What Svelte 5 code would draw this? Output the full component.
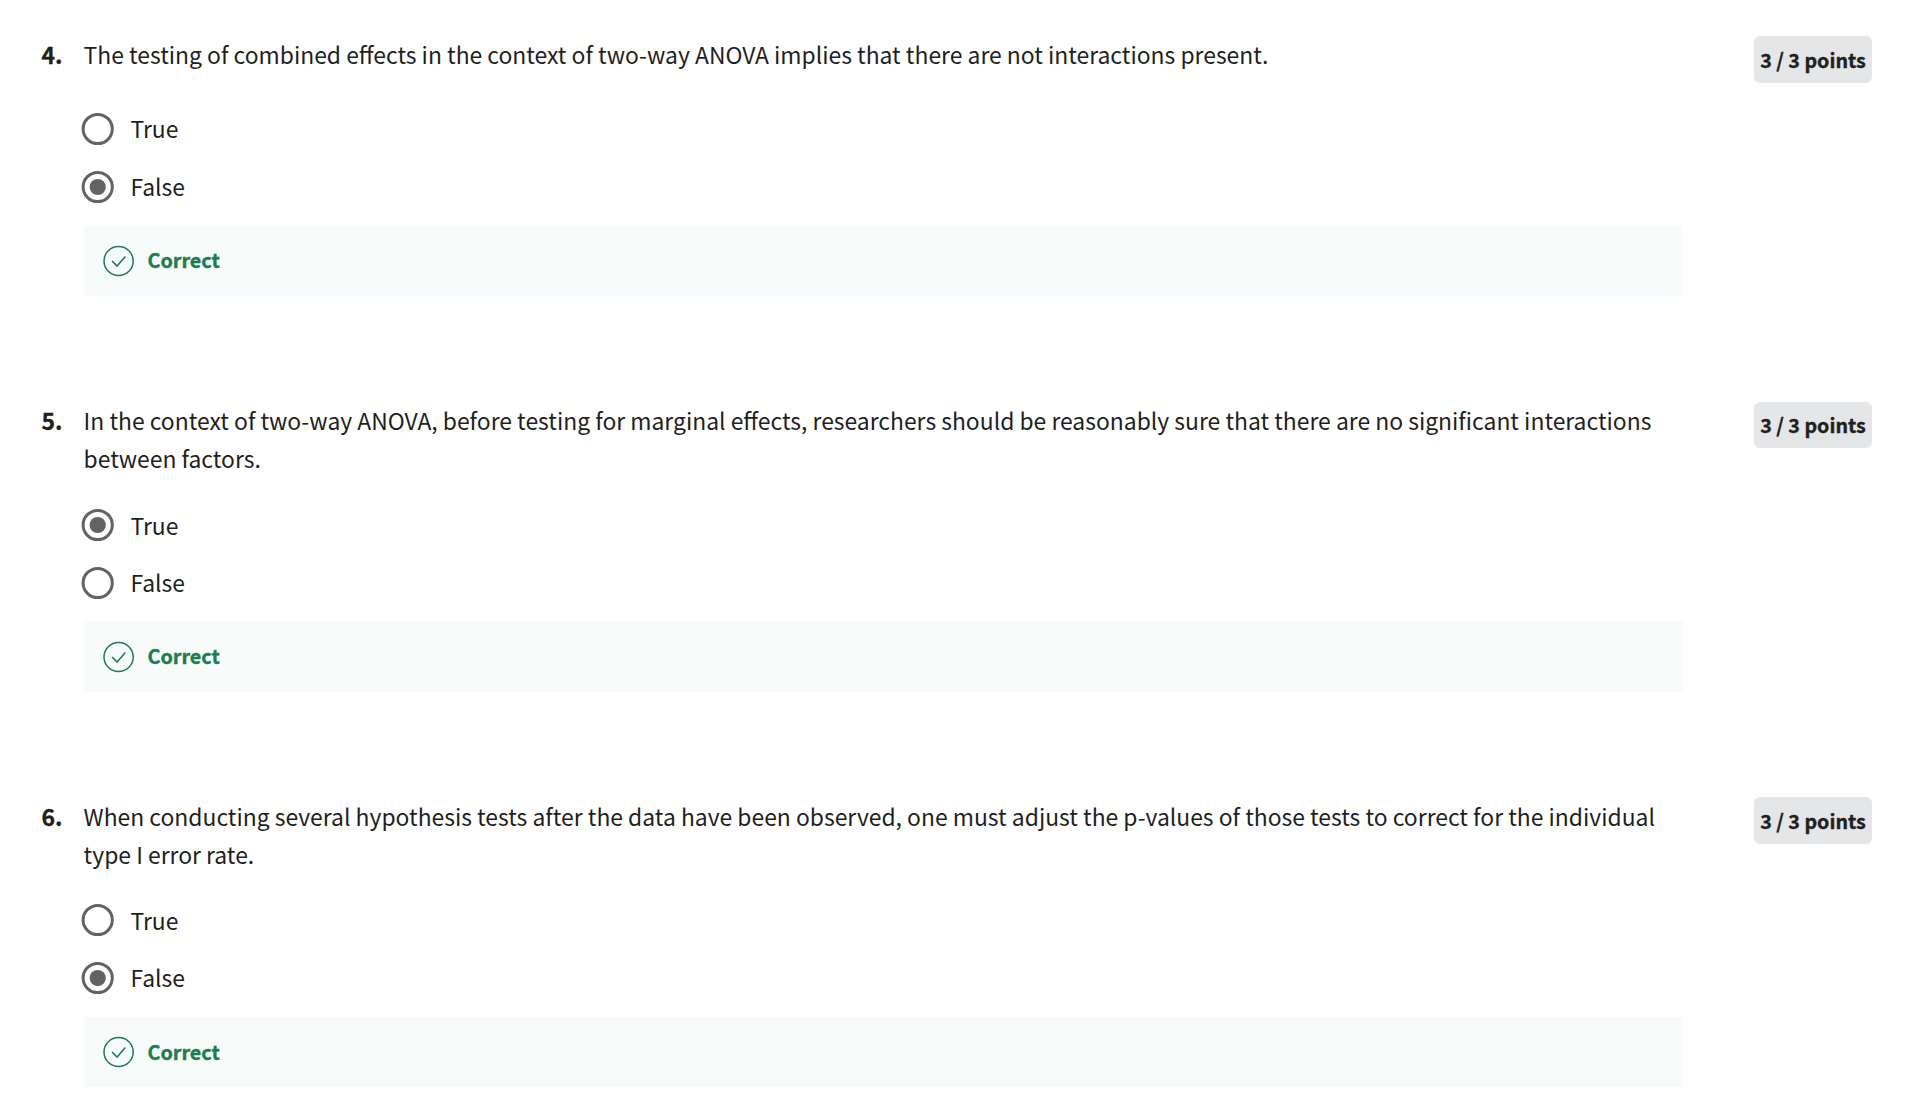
<script>
  const questions = [
    { number: 4, text: 'The testing of combined effects in the context of two-way ANOVA implies that there are not interactions present.', answer: 'False' },
    { number: 5, text: 'In the context of two-way ANOVA, before testing for marginal effects, researchers should be reasonably sure that there are no significant interactions between factors.', answer: 'True' },
    { number: 6, text: 'When conducting several hypothesis tests after the data have been observed, one must adjust the p-values of those tests to correct for the individual type I error rate.', answer: 'False' },
  ];
</script>

<main>
  {#each questions as q}
    <section class="q{q.number}">
      <div class="number">{q.number}.</div>
      <div class="body">
        <p class="prompt">{q.text}</p>
        <div class="options">
          {#each ['True', 'False'] as option}
            <div class="option">
              <svg class="radio" viewBox="0 0 34 34">
                <circle cx="16.7" cy="17" r="14.6" fill="none" stroke="#636363" stroke-width="3" />
                {#if q.answer === option}<circle cx="16.7" cy="17" r="8.1" fill="#636363" />{/if}
              </svg>
              <span>{option}</span>
            </div>
          {/each}
        </div>
        <div class="feedback">
          <svg class="check" viewBox="0 0 32 32" fill="none" stroke="#1d7c50" stroke-width="1.5">
            <circle cx="15.6" cy="16" r="14.6" />
            <path d="M9.1 15.9l5 5.2 8.2-9.7" />
          </svg>
          <span>Correct</span>
        </div>
      </div>
      <div class="points">3 / 3 points</div>
    </section>
  {/each}
</main>

<style>
  :global(body) { background: #fff; }
  main {
    height: 1113px;
    overflow: hidden;
    box-sizing: border-box;
    padding: 36px 38px 0 41px;
    font-family: "Noto Sans CJK SC", "Noto Sans", sans-serif;
    font-size: 22.9px;
    color: #1f1f1f;
  }
  section { display: flex; align-items: flex-start; height: 366px; }
  .number { width: 42.6px; padding-left: 0.4px; box-sizing: border-box; margin-top: -1px; font-weight: 700; line-height: 38px; }
  .number, .points, .feedback span { -webkit-text-stroke: 0.35px currentColor; }
  .body { width: 1598.4px; }
  .prompt { margin: -1px 0 1px; min-height: 46px; line-height: 38px; }
  .options { padding-top: 18px; }
  .option { display: flex; align-items: center; height: 58px; }
  .option span { margin-top: -2px; }
  .radio { width: 34px; height: 34px; margin: 0 15.4px 0 -2.6px; }
  .feedback { display: flex; align-items: center; height: 70px; margin: 10px 0 0 0.4px; padding-left: 19px; background: #f7fbf9; color: #1d7c50; font-weight: 700; font-size: 19.8px; }
  .feedback span { margin-top: -3px; }
  .check { width: 32px; height: 32px; margin-right: 12.5px; }
  .points { margin-left: auto; width: 118px; height: 47px; line-height: 47px; border-radius: 6px; background: #e5e6e8; font-weight: 700; font-size: 19.7px; text-align: center; white-space: nowrap; }

  .q5 { height: 395px; }
  .q5 .feedback { margin-top: 9px; height: 71px; }
  .q5 .feedback span { margin-top: -2px; }
  .q5 .points { height: 46px; line-height: 46px; }
  .q6 .number { margin-top: 0; }
  .q6 .prompt { margin: 0; }
  .q6 .feedback span { margin-top: -1px; }
  .q5 .option:first-child span, .q6 .option:first-child span { margin-top: 0; }
</style>
